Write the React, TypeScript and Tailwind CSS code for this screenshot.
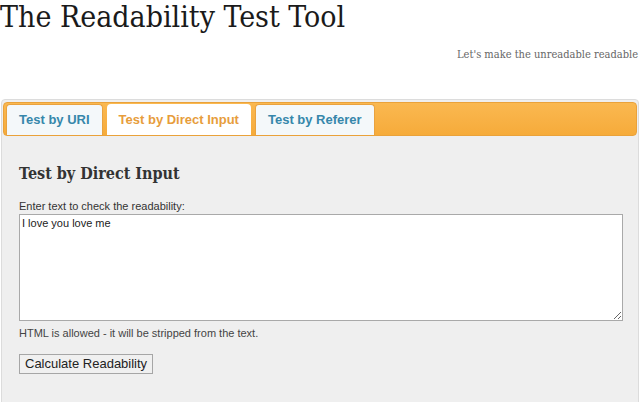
import React from "react";

const tabs = [
  { label: "Test by URI", active: false },
  { label: "Test by Direct Input", active: true },
  { label: "Test by Referer", active: false },
];

export default function App() {
  return (
    <div className="h-[402px] w-[640px] overflow-hidden bg-white">
      {/* Header */}
      <h1 className="pt-[1px] text-[30px] leading-[32px] text-[#1a1a1a] [font-family:'DejaVu_Serif_Condensed','DejaVu_Serif',serif]">
        The Readability Test Tool
      </h1>
      <p className="mt-[15px] pr-[2px] text-right text-[11px] leading-[14px] text-[#666] [font-family:'DejaVu_Serif_Condensed','DejaVu_Serif',serif]">
        Let's make the unreadable readable
      </p>

      {/* Panel */}
      <div className="mx-[1px] mt-[37px] h-[400px] rounded-[4px] border border-[#dcdcdc] bg-[#efefef]">
        {/* Tab bar */}
        <div className="mx-[1px] mt-[2px] flex h-[34px] items-end gap-[4px] rounded-[4px] border border-[#eaa23a] bg-gradient-to-b from-[#fab850] to-[#f6ab3a] pl-[2px]">
          {tabs.map((tab) => (
            <div
              key={tab.label}
              className={
                tab.active
                  ? "flex h-[31px] items-center rounded-t-[4px] bg-white px-[12px] text-[13px] font-bold text-[#e79d3c] [font-family:'Liberation_Sans',Arial,sans-serif]"
                  : "flex h-[31px] items-center rounded-t-[4px] border border-b-0 border-[#e9a23f] bg-[#f4f8fa] px-[12px] text-[13px] font-bold text-[#3687ab] [font-family:'Liberation_Sans',Arial,sans-serif]"
              }
            >
              {tab.label}
            </div>
          ))}
        </div>

        {/* Body */}
        <div className="px-[17px] pt-[28px] [font-family:'Liberation_Sans',Arial,sans-serif]">
          <h2 className="text-[16px] leading-[20px] font-bold text-[#333] [font-family:'DejaVu_Serif_Condensed','DejaVu_Serif',serif]">
            Test by Direct Input
          </h2>
          <label className="mt-[16px] block text-[11px] leading-[13px] text-[#333]">
            Enter text to check the readability:
          </label>
          <textarea
            defaultValue="I love you love me"
            className="mt-[1px] block h-[107px] w-[604px] resize-y border border-[#a9a9a9] bg-white px-[2px] py-[1px] text-[11px] leading-[14px] text-[#222] outline-none"
          />
          <p className="mt-[6px] text-[11px] leading-[13px] text-[#444]">
            HTML is allowed - it will be stripped from the text.
          </p>
          <button
            type="button"
            className="mt-[14px] h-[20px] border border-[#a6a6a6] bg-[#f0f0f0] px-[5px] text-[13px] leading-[16px] text-[#222]"
          >
            Calculate Readability
          </button>
        </div>
      </div>
    </div>
  );
}
